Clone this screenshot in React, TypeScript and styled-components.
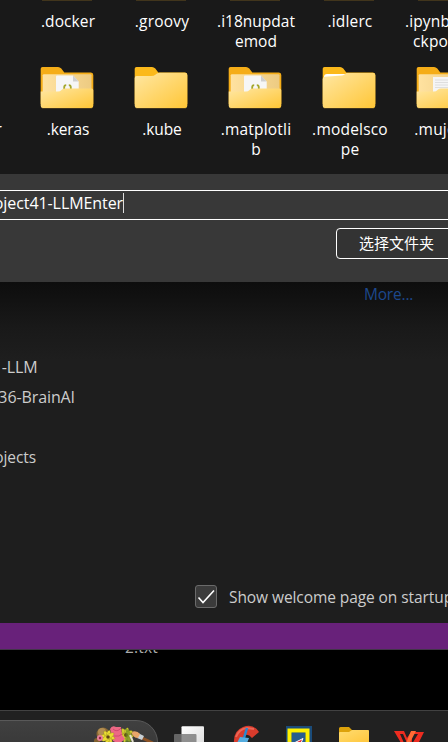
import React from "react";
import styled, { createGlobalStyle } from "styled-components";

const GlobalStyle = createGlobalStyle`
  *, *::before, *::after { box-sizing: border-box; }
  body { margin: 0; background: #000; overflow: hidden; }
`;

const Screen = styled.main`
  width: 448px;
  height: 742px;
  overflow: hidden;
  display: flex;
  flex-direction: column;
  background: #000;
  font-family: "Open Sans", "Noto Sans", "Noto Sans CJK SC", sans-serif;
  font-size: 15.5px;
  color: #fff;
`;

const FileList = styled.section`
  flex: 0 0 174px;
  overflow: hidden;
  display: grid;
  grid-template-columns: repeat(6, 94px);
  grid-template-rows: 108px 108px;
  margin-left: -74px;
  width: 564px;
  align-content: end;
  background: #191919;
`;

const FileCell = styled.div`
  display: flex;
  flex-direction: column;
  align-items: center;
`;

const FolderArt = styled.svg`
  display: block;
  flex: none;
  width: 54px;
  height: 43px;
  margin-bottom: 10px;
`;

const LabelLine = styled.span<{ $tracking?: number }>`
  display: block;
  line-height: 20px;
  white-space: nowrap;
  margin-left: 2px;
  letter-spacing: ${(p) => p.$tracking ?? 0}px;
`;

const DialogFooter = styled.section`
  flex: 0 0 108px;
  display: flex;
  flex-direction: column;
  padding-top: 16px;
  background: #383838;
`;

const PathField = styled.div`
  flex: none;
  height: 30px;
  border: solid #fff;
  border-width: 1px 0;
  display: flex;
  align-items: flex-start;
  justify-content: flex-end;
  width: 100%;
  padding: 2px 324px 0 0;
  font-size: 16px;
  line-height: 20px;
  letter-spacing: -0.08px;
  white-space: nowrap;
`;

const Caret = styled.span`
  flex: none;
  width: 1px;
  height: 20px;
  background: #ddd;
`;

const SelectButton = styled.button`
  flex: none;
  width: 132px;
  height: 31px;
  margin: 8px 0 0 336px;
  padding: 0 0 1px 22px;
  border: 1px solid #fff;
  border-radius: 4px;
  background: #333;
  color: #fff;
  font: 15px/20px "Noto Sans CJK SC", sans-serif;
  text-align: left;
  white-space: nowrap;
`;

const Welcome = styled.section`
  flex: 0 0 341px;
  display: flex;
  flex-direction: column;
  color: #ccc;
  background: linear-gradient(#0d0d0d 0, #131313 22px, #191919 45px, #1e1e1e 78px);
`;

const MoreLink = styled.a`
  margin: 1px 0 0 364px;
  line-height: 22px;
  letter-spacing: -0.2px;
  color: #1c488c;
`;

const RecentList = styled.ul`
  list-style: none;
  margin: 47px 0 0;
  padding: 0;
`;

const RecentItem = styled.li<{ $right: number; $size?: number; $tracking?: number }>`
  height: 30px;
  line-height: 30px;
  width: ${(p) => p.$right}px;
  display: flex;
  justify-content: flex-end;
  white-space: nowrap;
  font-size: ${(p) => p.$size ?? 16}px;
  letter-spacing: ${(p) => p.$tracking ?? 0}px;
`;

const StartupOption = styled.label`
  display: flex;
  align-items: center;
  gap: 12px;
  margin: 112px 0 0 195px;
  height: 24px;
  line-height: 24px;
  white-space: nowrap;
  letter-spacing: -0.08px;
`;

const OptionText = styled.span`
  padding-top: 1px;
`;

const CheckBox = styled.span`
  flex: none;
  width: 22px;
  height: 23px;
  border: 1px solid #6a6a6a;
  border-radius: 3px;
  background: #3b3b3b;
  svg { display: block; }
`;

const StatusBar = styled.div`
  flex: 0 0 27px;
  background: #68217a;
  border-bottom: 1px solid #423648;
`;

const Desktop = styled.section`
  flex: 0 0 60px;
  overflow: hidden;
  background: #000;
`;

const DesktopFile = styled.div`
  margin: -13.5px 0 0 125px;
  line-height: 20px;
  color: #aaa;
  letter-spacing: 0.2px;
`;

const Taskbar = styled.footer`
  flex: 0 0 32px;
  display: flex;
  overflow: hidden;
  border-top: 1px solid #424242;
  background: #212121;
`;

const SearchPill = styled.div`
  flex: none;
  width: 188px;
  height: 44px;
  margin: 9px 0 0 -30px;
  display: flex;
  justify-content: flex-end;
  border: 1px solid #595959;
  border-radius: 22px;
  background: linear-gradient(#404040, #343434);
`;

const AppIcons = styled.svg`
  display: block;
  flex: none;
  width: 290px;
  height: 32px;
`;

type FolderKind = "code" | "plain" | "paper" | "text";

function Folder({ kind }: { kind: FolderKind }) {
  const id = React.useId();
  const open = kind === "code" || kind === "text";
  return (
    <FolderArt viewBox="0 0 54 43">
      <defs>
        <linearGradient id={id + "f"} x1="0" y1="0" x2="1" y2="1">
          <stop offset="0" stopColor="#ffe7a3" />
          <stop offset="1" stopColor="#ffc636" />
        </linearGradient>
        <linearGradient id={id + "p"} x1="0" y1="0" x2="1" y2="0">
          <stop offset="0" stopColor="#ffe2a0" />
          <stop offset="1" stopColor="#edcb82" />
        </linearGradient>
      </defs>
      <path
        d="M.7 4V2.8Q.7 1 2.5 1H18Q20 1 21.3 2.5L24.3 6.5H51Q53.3 6.5 53.3 9V38H.7Z"
        fill={open ? "#f5ad18" : "#fbb91b"}
      />
      {open && (
        <>
          <path d="M2.7 9.3Q2.7 8.3 4 8.3H50.5Q51.5 8.3 51.5 9.3V26H2.7Z" fill={`url(#${id}p)`} />
          {kind === "code" ? (
            <>
              <path d="M16 10.3Q16 9.5 17 9.5H33L38.7 15.5V28H16Z" fill="#f6f6f6" />
              <path d="M33 9.5V15.5H38.7Z" fill="#cfcfcf" />
              <path d="M26.2 19.2Q24.2 19.2 24.2 21.2V24M28.8 19.2Q30.8 19.2 30.8 21.2V24" fill="none" stroke="#a4a72b" strokeWidth="1.8" />
            </>
          ) : (
            <>
              <path d="M17 11H38V28H17Z" fill="#f5f5f5" />
              <path d="M19 14H37M19 16.5H37M19 19H37M19 21.5H37" stroke="#dedede" />
            </>
          )}
          <path
            d="M.7 25.5H18Q20 25.5 21.5 24L22 23.5Q23 22.5 25 22.5H51.5Q53.3 22.5 53.3 24.3V39.8Q53.3 42 51.2 42H2.8Q.7 42 .7 39.8Z"
            fill={`url(#${id}f)`}
          />
        </>
      )}
      {kind === "paper" && <path d="M2 11Q2 8 5 8H25L20 13H2Z" fill="#fff" />}
      {!open && (
        <path
          d={
            kind === "plain"
              ? "M.7 12Q.7 10 2.7 10H17Q20 10 21.7 8.5L23 7.5Q24 6.8 26 6.8H51.3Q53.3 6.8 53.3 9V39.8Q53.3 42 51.2 42H2.8Q.7 42 .7 39.8Z"
              : "M.7 13Q.7 11 2.7 10.8L20 9.5Q22 9 23 8L24.5 7H51.3Q53.3 7 53.3 9V39.8Q53.3 42 51.2 42H2.8Q.7 42 .7 39.8Z"
          }
          fill={`url(#${id}f)`}
        />
      )}
      <path d="M2 42.4H52" stroke="#8a6a25" strokeWidth=".8" opacity=".5" />
    </FolderArt>
  );
}

type Entry = { kind: FolderKind; lines: string[]; tracking?: number };

const files: Entry[] = [
  { kind: "plain", lines: [] },
  { kind: "plain", lines: [".docker"], tracking: 0.1 },
  { kind: "plain", lines: [".groovy"], tracking: 0.2 },
  { kind: "plain", lines: [".i18nupdat", "emod"], tracking: 0 },
  { kind: "plain", lines: [".idlerc"], tracking: 0.15 },
  { kind: "plain", lines: [".ipynb_che", "ckpoints"], tracking: 0.15 },
  { kind: "plain", lines: [".jupyter"], tracking: 0.1 },
  { kind: "code", lines: [".keras"], tracking: -0.1 },
  { kind: "plain", lines: [".kube"], tracking: -0.1 },
  { kind: "code", lines: [".matplotli", "b"], tracking: 0.2 },
  { kind: "paper", lines: [".modelsco", "pe"], tracking: 0.2 },
  { kind: "text", lines: [".mujoco"], tracking: 0.2 },
];

const petals = [0, 45, 90, 135];

function Flower({ x, y, r, color }: { x: number; y: number; r: number; color: string }) {
  return (
    <g transform={`translate(${x} ${y})`}>
      {petals.map((a) => (
        <ellipse key={a} rx={r} ry={r * 0.33} fill={color} stroke="#77731b" strokeWidth=".3" transform={`rotate(${a + 12})`} />
      ))}
      <circle r={r * 0.26} fill="#604515" />
    </g>
  );
}

export default function App() {
  return (
    <>
      <GlobalStyle />
      <Screen>
        <FileList>
          {files.map((file, i) => (
            <FileCell key={i}>
              <Folder kind={file.kind} />
              {file.lines.map((line) => (
                <LabelLine key={line} $tracking={file.tracking}>{line}</LabelLine>
              ))}
            </FileCell>
          ))}
        </FileList>
        <DialogFooter>
          <PathField>
            <span>Project41-LLMEnter</span>
            <Caret />
          </PathField>
          <SelectButton>选择文件夹</SelectButton>
        </DialogFooter>
        <Welcome>
          <MoreLink>More...</MoreLink>
          <RecentList>
            <RecentItem $right={37.5} $tracking={-0.1}>Project41 -LLM</RecentItem>
            <RecentItem $right={75} $tracking={-0.1}>Project36-BrainAI</RecentItem>
            <RecentItem $right={0} />
            <RecentItem $right={36} $size={15.5} $tracking={-0.1}>Projects</RecentItem>
          </RecentList>
          <StartupOption>
            <CheckBox>
              <svg width="20" height="21" viewBox="0 0 20 21">
                <path d="M2.5 11.5 7 16.5 18 4.5" fill="none" stroke="#fff" strokeWidth="1.6" />
              </svg>
            </CheckBox>
            <OptionText>Show welcome page on startup</OptionText>
          </StartupOption>
        </Welcome>
        <StatusBar />
        <Desktop>
          <DesktopFile>2.txt</DesktopFile>
        </Desktop>
        <Taskbar>
          <SearchPill>
            <svg width="64" height="24" viewBox="94 721 64 24">
              <circle cx="104" cy="734" r="6.5" fill="#8b6a35" />
              <circle cx="103" cy="732" r="4" fill="#b28d52" />
              <circle cx="98" cy="741" r="3" fill="#80602d" />
              <path d="M139 736 143 738 154 743" stroke="#8b5225" strokeWidth="3" />
              <path d="M139 733 145 736 143 740 138 738Z" fill="#c9d0d5" />
              <path d="M132 732Q138 730 141 734L139 738Q134 738 132 732" fill="#e8a66a" />
              <Flower x={127} y={735} r={7.5} color="#d3ce30" />
              <path d="M127 728Q135 733 132 742L126 745Z" fill="#6c8b24" opacity=".65" />
              <path d="M131 735 134 742" stroke="#e4e1cc" strokeWidth="2" />
              <path d="M111 729Q113 725 117 727L122 727 123 735 126 739 120 744 114 741Z" fill="#ed6885" />
              <path d="M114 729Q118 733 122 728M115 736Q121 737 123 734" fill="none" stroke="#d04a70" />
              <Flower x={109} y={737} r={7} color="#ebdc32" />
              <circle cx="101" cy="738" r="3" fill="#e8819a" />
              <circle cx="101" cy="738" r="1.2" fill="#952645" />
            </svg>
          </SearchPill>
          <AppIcons viewBox="158 711 290 32">
            <defs>
              <linearGradient id="sheet" x1="0" y1="0" x2="1" y2="1">
                <stop stopColor="#fff" />
                <stop offset="1" stopColor="#d8d8d8" />
              </linearGradient>
              <linearGradient id="explorer" x1="0" y1="0" x2="1" y2="1">
                <stop stopColor="#ffdc71" />
                <stop offset="1" stopColor="#ffc63b" />
              </linearGradient>
            </defs>
            <rect x="181.5" y="726.3" width="22.5" height="24" rx="1" fill="url(#sheet)" />
            <rect x="174" y="734" width="22.5" height="20" rx="1" fill="#777" fillOpacity=".8" />
            <path d="M234 743Q233 731 243 727Q253 723 259 732L252 738Q247 732 243 737L242 743Z" fill="#d83b2c" />
            <path d="M236 737Q239 729 247 728L254 729" fill="none" stroke="#ec6656" strokeWidth="2" />
            <path d="M247 728 244 738" stroke="#2688d1" strokeWidth="2.5" />
            <path d="M240 737 249 738 247 743H237Z" fill="#54acdf" />
            <rect x="286" y="726" width="26" height="24" fill="#1b4c7a" />
            <path d="M289.5 750V730.5H307.5V750" fill="none" stroke="#fff100" strokeWidth="4" />
            <rect x="292" y="733" width="13" height="16" fill="#285e8d" />
            <path d="M294 743 303 738.5 301 743Z" fill="#e42834" stroke="#fff" />
            <path d="M339 728.5Q339 727 340.5 727H349L352 730H367Q369 730 369 732V738H339Z" fill="#dda20b" />
            <path d="M339 733Q339 732 340 732H349L352 730H368Q369 730 369 731V743H339Z" fill="url(#explorer)" />
            <path d="M394 731H404L407 738 411 732H424L416 748H411L408 742 404 748Z" fill="#ed2c20" />
            <path d="M400 734H403L407 743H404ZM412 734H418L412 744Z" fill="#242020" />
            <path d="M411 731H416L407 748H404Z" fill="#ff6b34" />
          </AppIcons>
        </Taskbar>
      </Screen>
    </>
  );
}
